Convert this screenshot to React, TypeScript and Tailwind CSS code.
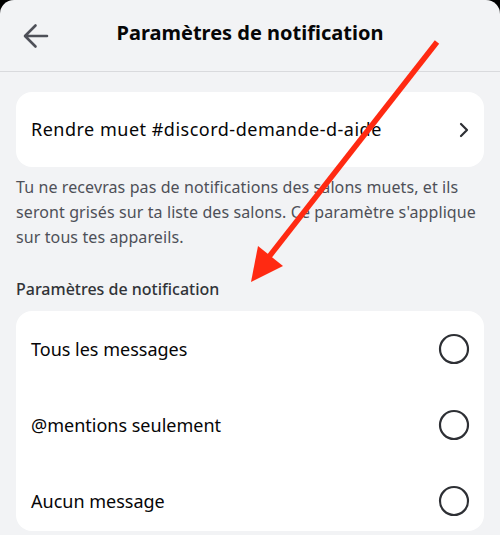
import React from "react";

const font = { fontFamily: '"Noto Sans", "Open Sans", Arial, sans-serif' };

function Radio() {
  return (
    <svg width="32" height="32" viewBox="0 0 32 32" className="shrink-0">
      <circle cx="16" cy="16" r="14" fill="none" stroke="#2e3035" strokeWidth="2.2" />
    </svg>
  );
}

function Row({ label }: { label: string }) {
  return (
    <div className="h-[76px] flex items-center justify-between pl-[15px] pr-[14px]">
      <span className="text-[18px] text-[#060607]">{label}</span>
      <Radio />
    </div>
  );
}

export default function App() {
  return (
    <div className="w-[500px] h-[535px] bg-black overflow-hidden relative" style={font}>
      <div className="h-full bg-[#f2f3f5] rounded-t-[14px] flex flex-col">
        <div className="h-[72px] shrink-0 grid grid-cols-[64px_1fr_64px] items-center border-b border-[#d9dadd]">
          <div className="flex items-center pl-[22px]">
            <svg width="28" height="28" viewBox="22 21 28 28">
              <path d="M47 35H25.5M35.5 24.5L25 35l10.5 10.5" fill="none" stroke="#4e5058" strokeWidth="2.6" strokeLinecap="round" strokeLinejoin="round" />
            </svg>
          </div>
          <div className="text-center text-[20px] font-bold text-[#060607] -mt-[5px]">Paramètres de notification</div>
          <div />
        </div>
        <div className="px-4 pt-[20px]">
          <div className="h-[75px] bg-white rounded-[16px] flex items-center justify-between pl-[15px] pr-[14px]">
            <span className="text-[18px] tracking-[0.5px] text-[#060607]">Rendre muet #discord-demande-d-aide</span>
            <svg width="12" height="16" viewBox="0 0 12 16">
              <path d="M3 2l6 6-6 6" fill="none" stroke="#2e3035" strokeWidth="2.2" strokeLinecap="round" strokeLinejoin="round" />
            </svg>
          </div>
          <p className="mt-[8px] text-[16px] leading-[25px] tracking-[0.1px] text-[#4e5058]">
            Tu ne recevras pas de notifications des salons muets, et ils seront grisés sur ta liste des salons. Ce paramètre s'applique sur tous tes appareils.
          </p>
          <div className="mt-[28px] text-[16px] leading-[22px] font-medium text-[#313338]">Paramètres de notification</div>
          <div className="mt-[11px] h-[220px] bg-white rounded-[16px] overflow-hidden">
            <Row label="Tous les messages" />
            <Row label="@mentions seulement" />
            <Row label="Aucun message" />
          </div>
        </div>
      </div>
      <svg className="absolute inset-0 pointer-events-none" width="500" height="535" viewBox="0 0 500 535">
        <line x1="437" y1="42" x2="268" y2="258" stroke="#ff2a12" strokeWidth="5.5" />
        <polygon points="251,282 258,246 283,266" fill="#ff2a12" />
      </svg>
    </div>
  );
}
